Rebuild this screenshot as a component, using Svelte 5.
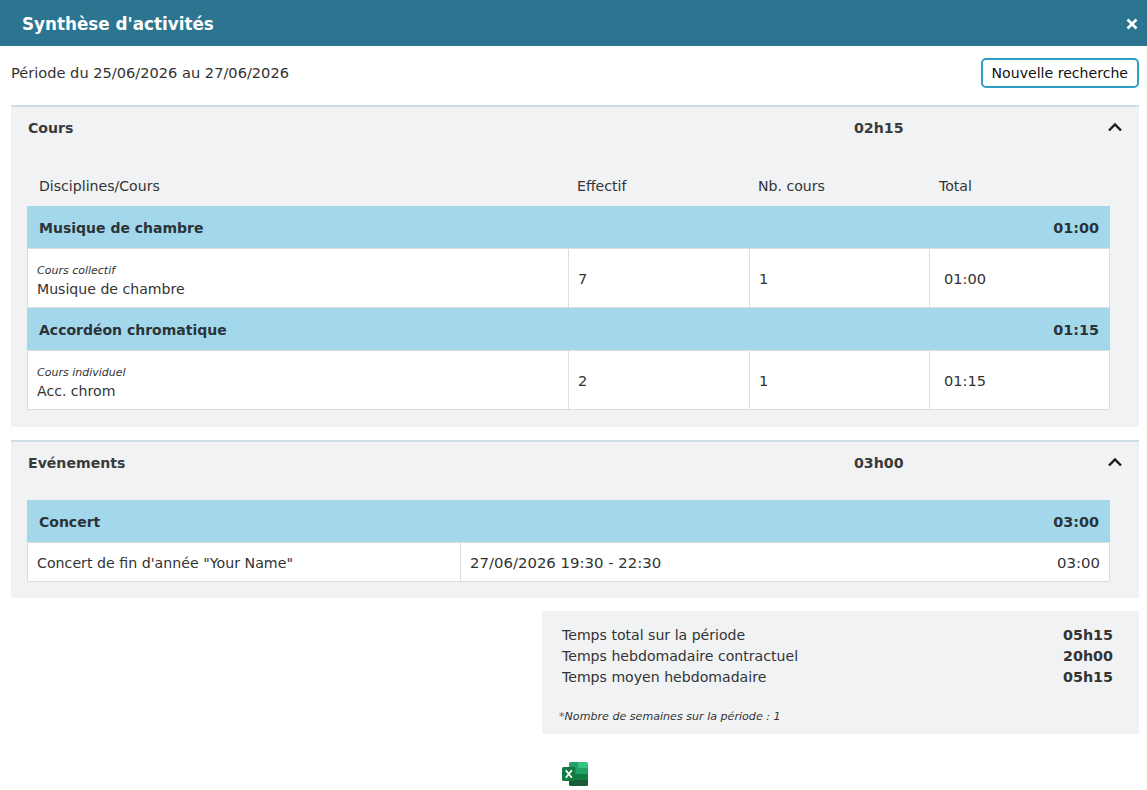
<script>
  const groups = [
    { name: 'Musique de chambre', total: '01:00', type: 'Cours collectif', label: 'Musique de chambre', effectif: 7, nb: 1 },
    { name: 'Accordéon chromatique', total: '01:15', type: 'Cours individuel', label: 'Acc. chrom', effectif: 2, nb: 1 }
  ];
  const totals = [
    ['Temps total sur la période', '05h15'],
    ['Temps hebdomadaire contractuel', '20h00'],
    ['Temps moyen hebdomadaire', '05h15']
  ];
</script>

<div class="modal">
  <header class="title">
    <h1>Synthèse d'activités</h1>
    <span class="close">
      <svg width="12" height="12" viewBox="0 0 12 12"><path d="M1.5 1.5l9 9M10.5 1.5l-9 9" stroke="#fff" stroke-width="2.6" /></svg>
    </span>
  </header>

  <div class="period">
    <span>Période du 25/06/2026 au 27/06/2026</span>
    <button>Nouvelle recherche</button>
  </div>

  <section class="panel first">
    <div class="panel-head">
      <span class="name">Cours</span>
      <span class="sum">02h15</span>
      <svg class="chev" width="16" height="10" viewBox="0 0 16 10"><path d="M2 8.5l6-6 6 6" fill="none" stroke="#1c1c1c" stroke-width="2.4" /></svg>
    </div>
    <div class="cols">
      <span class="c1">Disciplines/Cours</span>
      <span class="c2">Effectif</span>
      <span class="c3">Nb. cours</span>
      <span class="c4">Total</span>
    </div>
    <div class="table">
      {#each groups as g}
        <div class="group"><span>{g.name}</span><span class="time">{g.total}</span></div>
        <div class="row">
          <div class="cell c1"><em>{g.type}</em><span>{g.label}</span></div>
          <div class="cell c2">{g.effectif}</div>
          <div class="cell c3">{g.nb}</div>
          <div class="cell c4">{g.total}</div>
        </div>
      {/each}
    </div>
  </section>

  <section class="panel second">
    <div class="panel-head">
      <span class="name">Evénements</span>
      <span class="sum">03h00</span>
      <svg class="chev" width="16" height="10" viewBox="0 0 16 10"><path d="M2 8.5l6-6 6 6" fill="none" stroke="#1c1c1c" stroke-width="2.4" /></svg>
    </div>
    <div class="table">
      <div class="group"><span>Concert</span><span class="time">03:00</span></div>
      <div class="row event">
        <div class="cell e1">Concert de fin d'année "Your Name"</div>
        <div class="cell e2"><span>27/06/2026 19:30 - 22:30</span><span>03:00</span></div>
      </div>
    </div>
  </section>

  <div class="summary">
    {#each totals as t}
      <div class="line"><span>{t[0]}</span><b>{t[1]}</b></div>
    {/each}
    <p><i class="star">*</i>Nombre de semaines sur la période : 1</p>
  </div>

  <div class="export">
    <svg width="26" height="24" viewBox="0 0 26 24">
      <path d="M7 1.5A1.5 1.5 0 0 1 8.5 0H16v6H7z" fill="#21a366" />
      <path d="M16 0h8.5A1.5 1.5 0 0 1 26 1.5V6H16z" fill="#33c481" />
      <rect x="7" y="6" width="19" height="6" fill="#21a366" />
      <rect x="7" y="12" width="19" height="6" fill="#107c41" />
      <path d="M7 18h19v4.5a1.5 1.5 0 0 1-1.5 1.5h-16A1.5 1.5 0 0 1 7 22.5z" fill="#185c37" />
      <rect x="0" y="5" width="13.5" height="14" rx="1.5" fill="#107c41" />
      <path d="M3.8 8.2l6 7.6M9.8 8.2l-6 7.6" stroke="#fff" stroke-width="1.8" />
    </svg>
  </div>
</div>

<style>
  :global(body) {
    margin: 0;
    background: #fff;
  }
  .modal {
    font-family: "DejaVu Sans", Verdana, sans-serif;
    font-size: 14.1px;
    color: #333;
    height: 790px;
    overflow: hidden;
  }
  .title {
    height: 46px;
    background: #2b7590;
    display: flex;
    align-items: center;
    justify-content: space-between;
    padding: 0 9px 0 22px;
  }
  h1 {
    margin: 1px 0 0;
    font-size: 16.8px;
    font-weight: 700;
    color: #fff;
  }
  .close {
    display: flex;
    margin-top: 1px;
  }
  .period {
    display: flex;
    justify-content: space-between;
    align-items: center;
    height: 59px;
    padding: 0 8px 0 11px;
    font-size: 14.6px;
  }
  .period span {
    margin-top: -7px;
  }
  button {
    font: inherit;
    font-size: 14.1px;
    color: #111;
    height: 30px;
    padding: 0 9px;
    background: #fff;
    border: 2px solid #2e9fc0;
    border-radius: 5px;
    margin-top: -5px;
  }
  .panel {
    margin: 0 8px 0 11px;
    background: #f0f2f4;
    border-top: 2px solid #cddde6;
    padding: 0 29px 0 16px;
  }
  .first {
    height: 322px;
    box-sizing: border-box;
    margin-bottom: 13px;
  }
  .second {
    height: 158px;
    box-sizing: border-box;
  }
  .panel-head {
    display: flex;
    align-items: center;
    height: 42px;
    position: relative;
  }
  .name {
    font-weight: 700;
    font-size: 14.1px;
    color: #3a3a3a;
    margin-left: 1px;
  }
  .sum {
    position: absolute;
    left: 827px;
    font-weight: 700;
    font-size: 14.2px;
    color: #3a3a3a;
  }
  .chev {
    position: absolute;
    right: -13px;
    top: 15px;
  }
  .cols {
    display: flex;
    height: 36px;
    margin-top: 19px;
    margin-bottom: 2px;
    align-items: center;
  }
  .cols .c1 {
    width: 550px;
    padding-left: 12px;
    box-sizing: border-box;
  }
  .cols .c2,
  .cols .c3 {
    width: 181px;
  }
  .table {
    border-left: 1px solid #ddd;
    border-right: 1px solid #ddd;
    border-bottom: 1px solid #ddd;
  }
  .second .table {
    margin-top: 16px;
  }
  .group {
    display: flex;
    justify-content: space-between;
    align-items: center;
    height: 42px;
    margin: 0 -1px;
    padding: 1px 11px 0 12px;
    box-sizing: border-box;
    background: #a3d8ec;
    font-weight: 700;
    font-size: 14px;
    color: #2b3338;
  }
  .time {
    font-size: 14.4px;
  }
  .row {
    display: flex;
    background: #fff;
    border-top: 1px solid #ddd;
    border-bottom: 1px solid #ddd;
    box-sizing: border-box;
    height: 60px;
  }
  .row:last-child {
    border-bottom: none;
    height: 59px;
  }
  .cell {
    display: flex;
    align-items: center;
    padding-left: 9px;
    box-sizing: border-box;
    border-left: 1px solid #ddd;
    font-size: 14.6px;
  }
  .cell:first-child {
    border-left: none;
  }
  .row .c1 {
    width: 540px;
    flex-direction: column;
    align-items: flex-start;
    justify-content: center;
    padding-top: 8px;
    font-size: 14.1px;
  }
  .row .c2 {
    width: 181px;
  }
  .row .c3 {
    width: 180px;
  }
  .row .c4 {
    flex: 1;
    padding-left: 14px;
  }
  em {
    font-size: 11px;
    line-height: 14px;
    color: #333;
  }
  .c1 span {
    line-height: 22px;
  }
  .row.event {
    height: 39px;
  }
  .row.event .cell {
    padding-top: 1px;
  }
  .e1 {
    width: 432px;
    font-size: 14.2px;
  }
  .e2 {
    flex: 1;
    justify-content: space-between;
    padding-right: 9px;
    font-size: 14.9px;
  }
  .summary {
    width: 597px;
    height: 123px;
    box-sizing: border-box;
    margin: 13px 8px 0 auto;
    background: #f0f2f4;
    padding: 14px 26px 0 20px;
  }
  .line {
    display: flex;
    justify-content: space-between;
    height: 21px;
    line-height: 21px;
  }
  .line b {
    font-size: 14.3px;
  }
  p {
    margin: 22px 0 0 -3px;
    font-size: 11.1px;
    font-style: italic;
    line-height: 14px;
  }
  .star {
    color: #8a4a2a;
  }
  .export {
    margin: 28px 0 0 562px;
    display: flex;
  }
</style>
